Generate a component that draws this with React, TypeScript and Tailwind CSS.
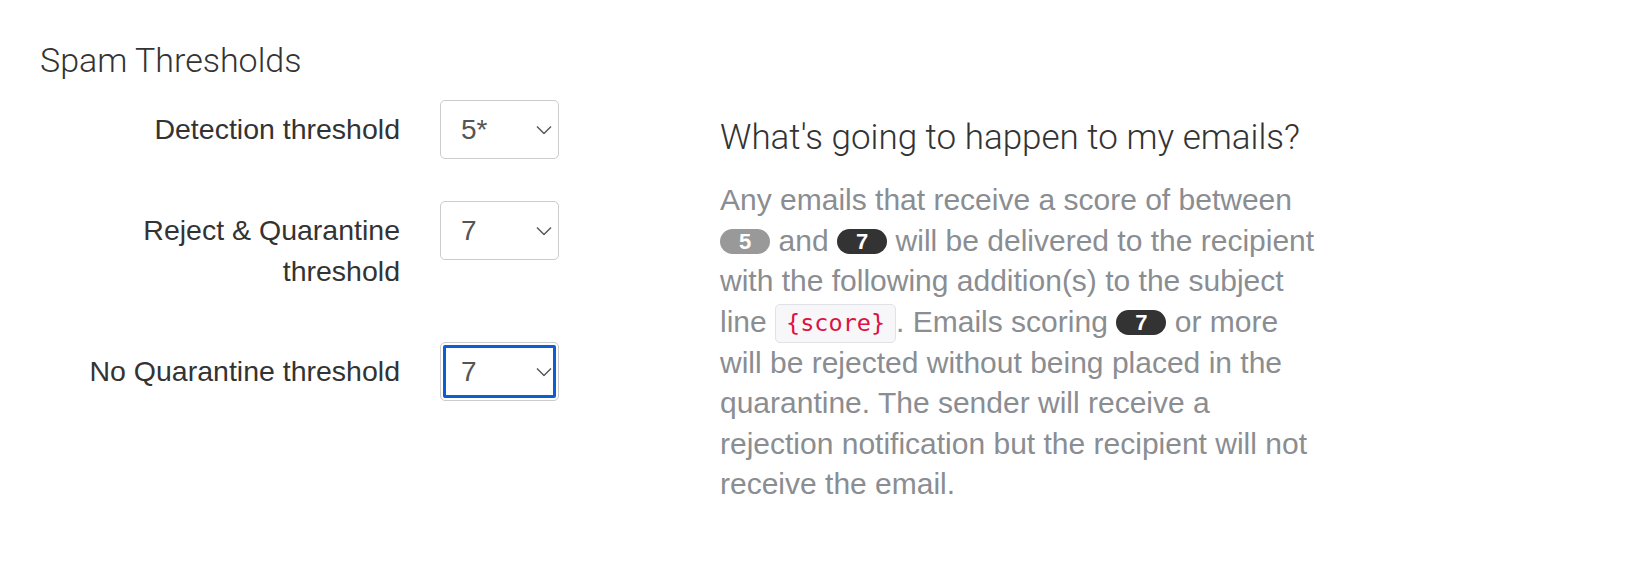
import type { ReactNode } from "react";

type Row = { label: string; value: string; options: string[]; focused?: boolean };

const rows: Row[] = [
  { label: "Detection threshold", value: "5*", options: ["3", "4", "5*", "6", "7", "8"] },
  { label: "Reject & Quarantine threshold", value: "7", options: ["5", "6", "7", "8", "9", "10"] },
  { label: "No Quarantine threshold", value: "7", options: ["5", "6", "7", "8", "9", "10"], focused: true },
];

function Chevron() {
  return (
    <svg
      viewBox="0 0 16 9"
      className="pointer-events-none absolute right-[7px] top-1/2 h-[9px] w-[16px] -translate-y-1/2"
      fill="none"
      stroke="#555"
      strokeWidth="1.4"
    >
      <polyline points="1,1 8,8 15,1" />
    </svg>
  );
}

function ThresholdSelect({ row }: { row: Row }) {
  return (
    <div className="relative ml-[40px] h-[59px] w-[119px] shrink-0">
      <select
        defaultValue={row.value}
        className={
          "h-full w-full appearance-none rounded-[5px] border border-[#ccc] bg-white pl-[20px] text-[28px] text-[#555] font-['Liberation_Sans',Arial,sans-serif] " +
          (row.focused ? "outline-3 outline-solid outline-[#0b5fcf] -outline-offset-6" : "outline-none")
        }
      >
        {row.options.map((o) => (
          <option key={o} value={o}>
            {o}
          </option>
        ))}
      </select>
      <Chevron />
    </div>
  );
}

function Badge({ dark, children }: { dark?: boolean; children: ReactNode }) {
  return (
    <span
      className={
        "inline-block h-[25px] rounded-full px-[19px] text-[22px] font-bold leading-[25px] text-white align-[2px] " +
        (dark ? "bg-[#333]" : "bg-[#999]")
      }
    >
      {children}
    </span>
  );
}

export default function App() {
  return (
    <div className="flex min-h-screen bg-white pl-[40px] pt-[40px] font-['Liberation_Sans',Arial,sans-serif]">
      {/* left: the three score selects */}
      <div className="w-[680px] shrink-0">
        <h3 className="font-['Roboto',sans-serif] text-[34px] font-light leading-[40px] text-[#333]">
          Spam Thresholds
        </h3>
        <form className="mt-[20px] flex flex-col gap-[42px]">
          {rows.map((row) => (
            <div key={row.label} className="flex items-start">
              <label className="w-[360px] shrink-0 py-[9px] text-right text-[28.5px] leading-[40.5px] text-[#333]">
                {row.label}
              </label>
              <ThresholdSelect row={row} />
            </div>
          ))}
        </form>
      </div>

      {/* right: explanation of what the thresholds do */}
      <div className="w-[598px] shrink-0 pt-[78px]">
        <h3 className="font-['Roboto',sans-serif] text-[35px] font-light leading-[40px] text-[#333]">
          What's going to happen to my emails?
        </h3>
        <p className="mt-[22px] text-[30px] leading-[40.5px] text-[#8a8d91]">
          Any emails that receive a score of between <Badge>5</Badge> and <Badge dark>7</Badge> will be
          delivered to the recipient with the following addition(s) to the subject line{" "}
          <code className="inline-block rounded-[5px] border border-[#e1e1e8] bg-[#f7f7f9] px-[10px] align-[1px] font-['DejaVu_Sans_Mono',monospace] text-[23.5px] leading-[37px] text-[#dd1144]">
            {"{score}"}
          </code>
          . Emails scoring <Badge dark>7</Badge> or more will be rejected without being placed in the
          quarantine. The sender will receive a rejection notification but the recipient will not receive
          the email.
        </p>
      </div>
    </div>
  );
}
